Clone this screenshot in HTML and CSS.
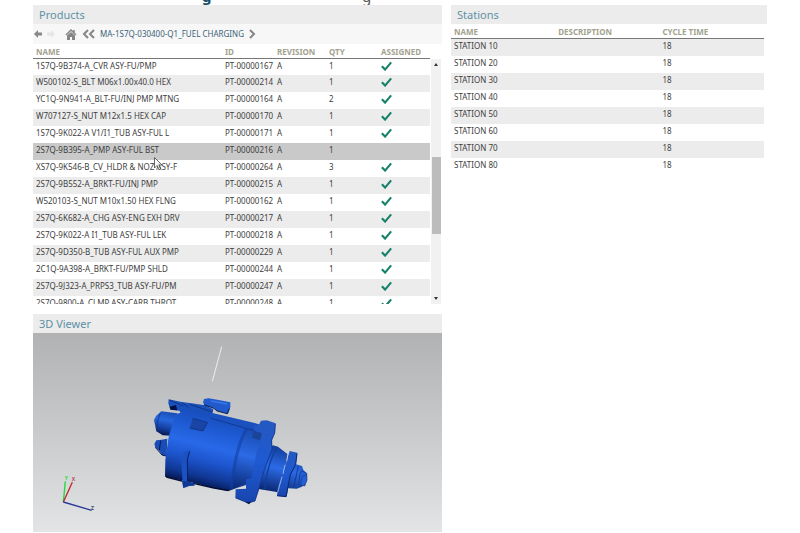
FILE: index.html
```html
<!DOCTYPE html>
<html lang="en">
<head>
<meta charset="utf-8">
<title>Products and Stations</title>
<link rel="stylesheet" href="styles.css">
</head>
<body>
<header class="masthead"><span class="masthead-main">g</span><span class="masthead-sub">g</span></header>
<svg class="defs" aria-hidden="true"><symbol id="check" viewBox="0 0 30 28"><path d="M2 15L11 24L28 4" fill="none" stroke="#16806b" stroke-width="6"/></symbol></svg>
<main class="workspace">
  <div class="column">
    <section class="panel">
      <h2 class="panel-title">Products</h2>
      <nav class="toolbar">
        <button class="tool" aria-label="Back"><svg width="8" height="8" viewBox="0 0 8 8"><path d="M0 4L4 0V2.5H8V5.5H4V8Z" fill="#888"/></svg></button>
        <button class="tool" aria-label="Forward" disabled><svg width="8" height="8" viewBox="0 0 8 8"><path d="M8 4L4 0V2.5H0V5.5H4V8Z" fill="#e6e6e6"/></svg></button>
        <button class="tool home" aria-label="Home"><svg width="12" height="11" viewBox="0 0 12 11"><path d="M1 6L6 1L11 6M9 1V4" fill="none" stroke="#858585" stroke-width="1.5"/><path d="M2 6.500L6 3L10 6.500V11H7V8H5V11H2Z" fill="#858585"/></svg></button>
        <button class="tool" aria-label="Top level"><svg width="13" height="10" viewBox="0 0 13 10"><path d="M6 1L2 5L6 9M12 1L8 5L12 9" fill="none" stroke="#858585" stroke-width="2"/></svg></button>
        <a class="crumb" href="#">MA-1S7Q-030400-Q1_FUEL CHARGING</a>
        <button class="tool" aria-label="Next level"><svg width="7" height="10" viewBox="0 0 7 10"><path d="M1 1L5 5L1 9" fill="none" stroke="#858585" stroke-width="2"/></svg></button>
      </nav>
      <div class="list">
        <div class="list-view">
          <table class="grid products">
            <colgroup><col class="p-name"><col class="p-id"><col class="p-rev"><col class="p-qty"><col></colgroup>
            <thead><tr><th>NAME</th><th>ID</th><th>REVISION</th><th>QTY</th><th>ASSIGNED</th></tr></thead>
            <tbody>
              <tr class="first"><td>1S7Q-9B374-A_CVR ASY-FU/PMP</td><td>PT-00000167</td><td>A</td><td>1</td><td><svg class="check"><use href="#check"/></svg></td></tr>
              <tr><td>W500102-S_BLT M06x1.00x40.0 HEX</td><td>PT-00000214</td><td>A</td><td>1</td><td><svg class="check"><use href="#check"/></svg></td></tr>
              <tr><td>YC1Q-9N941-A_BLT-FU/INJ PMP MTNG</td><td>PT-00000164</td><td>A</td><td>2</td><td><svg class="check"><use href="#check"/></svg></td></tr>
              <tr><td>W707127-S_NUT M12x1.5 HEX CAP</td><td>PT-00000170</td><td>A</td><td>1</td><td><svg class="check"><use href="#check"/></svg></td></tr>
              <tr><td>1S7Q-9K022-A V1/I1_TUB ASY-FUL L</td><td>PT-00000171</td><td>A</td><td>1</td><td><svg class="check"><use href="#check"/></svg></td></tr>
              <tr class="selected"><td class="pointed">2S7Q-9B395-A_PMP ASY-FUL BST<svg class="pointer" width="9" height="14" viewBox="0 0 9 14"><path d="M.5 .5V11L3 8.500L5 13L6.500 12L5 8H8Z" fill="#fff" fill-opacity=".7" stroke="#444" stroke-width=".8"/></svg></td><td>PT-00000216</td><td>A</td><td>1</td><td></td></tr>
              <tr><td>XS7Q-9K546-B_CV_HLDR &amp; NOZ ASY-F</td><td>PT-00000264</td><td>A</td><td>3</td><td><svg class="check"><use href="#check"/></svg></td></tr>
              <tr><td>2S7Q-9B552-A_BRKT-FU/INJ PMP</td><td>PT-00000215</td><td>A</td><td>1</td><td><svg class="check"><use href="#check"/></svg></td></tr>
              <tr><td>W520103-S_NUT M10x1.50 HEX FLNG</td><td>PT-00000162</td><td>A</td><td>1</td><td><svg class="check"><use href="#check"/></svg></td></tr>
              <tr><td>2S7Q-6K682-A_CHG ASY-ENG EXH DRV</td><td>PT-00000217</td><td>A</td><td>1</td><td><svg class="check"><use href="#check"/></svg></td></tr>
              <tr><td>2S7Q-9K022-A I1_TUB ASY-FUL LEK</td><td>PT-00000218</td><td>A</td><td>1</td><td><svg class="check"><use href="#check"/></svg></td></tr>
              <tr><td>2S7Q-9D350-B_TUB ASY-FUL AUX PMP</td><td>PT-00000229</td><td>A</td><td>1</td><td><svg class="check"><use href="#check"/></svg></td></tr>
              <tr><td>2C1Q-9A398-A_BRKT-FU/PMP SHLD</td><td>PT-00000244</td><td>A</td><td>1</td><td><svg class="check"><use href="#check"/></svg></td></tr>
              <tr><td>2S7Q-9J323-A_PRPS3_TUB ASY-FU/PM</td><td>PT-00000247</td><td>A</td><td>1</td><td><svg class="check"><use href="#check"/></svg></td></tr>
              <tr><td>2S7Q-9800-A_CLMP ASY-CARB THROT</td><td>PT-00000248</td><td>A</td><td>1</td><td><svg class="check"><use href="#check"/></svg></td></tr>
            </tbody>
          </table>
        </div>
        <div class="scrollbar"><span class="arrow up"></span><span class="thumb"></span><span class="arrow down"></span></div>
      </div>
    </section>
    <section class="panel">
      <h2 class="panel-title">3D Viewer</h2>
      <div class="viewer">
        <svg class="scene" viewBox="9 99 1227 597" preserveAspectRatio="xMinYMin meet" role="img" aria-label="Fuel pump model">
          <defs>
            <linearGradient id="body" gradientUnits="userSpaceOnUse" x1="255" y1="225" x2="198" y2="448"><stop offset="0" stop-color="#174cb8"/><stop offset=".2" stop-color="#1d58d0"/><stop offset=".45" stop-color="#2869e8"/><stop offset=".65" stop-color="#1d54cc"/><stop offset=".85" stop-color="#103794"/><stop offset="1" stop-color="#041244"/></linearGradient>
            <linearGradient id="neck" gradientUnits="userSpaceOnUse" x1="345" y1="265" x2="300" y2="450"><stop offset="0" stop-color="#1747ac"/><stop offset=".45" stop-color="#2b6be6"/><stop offset="1" stop-color="#0a2874"/></linearGradient>
            <linearGradient id="nose" gradientUnits="userSpaceOnUse" x1="425" y1="325" x2="394" y2="455"><stop offset="0" stop-color="#143f9e"/><stop offset=".45" stop-color="#2b6be6"/><stop offset="1" stop-color="#0a2770"/></linearGradient>
            <linearGradient id="port" gradientUnits="userSpaceOnUse" x1="80" y1="212" x2="63" y2="288"><stop offset="0" stop-color="#174cb3"/><stop offset=".35" stop-color="#2767dc"/><stop offset=".7" stop-color="#143c9c"/><stop offset="1" stop-color="#04113f"/></linearGradient>
            <linearGradient id="flange" x1="0" y1="0" x2="0" y2="1"><stop offset="0" stop-color="#2558c0"/><stop offset=".5" stop-color="#1f5ad2"/><stop offset="1" stop-color="#1845ad"/></linearGradient>
          </defs>
          <path d="M575 140L547 244" stroke="#eee" stroke-width="3"/>
          <g transform="translate(330 120)">
            <path d="M86 178L125 186L155 190L195 196L220 208L214 240L130 232L118 212L91 209L85 190Z" fill="#1a50bb"/>
            <path d="M89 200L108 195L112 211L92 209Z" fill="#041242"/>
            <path d="M88 180L130 198M126 188L146 202M150 193L216 216" fill="none" stroke="#0a2669" stroke-width="2"/>
            <path d="M192 177L206 175L240 181L271 187L271 202L264 221L231 212L222 204L196 197L189 188Z" fill="#215acc"/>
            <path d="M192 194L222 205L231 213L262 221L268 206" fill="none" stroke="#071a4d" stroke-width="3"/>
            <path d="M212 183L262 192" stroke="#3976e7" stroke-width="4"/>
            <path d="M42 240L48 228L64 214L112 220L108 288L68 286L49 274Z" fill="url(#port)"/>
            <path d="M61 219Q48 244 52 274" fill="none" stroke="#0d317f" stroke-width="2"/>
            <path d="M43 312L49 301L60 300L82 296L80 348L66 345L58 332L46 322Z" fill="#1a4cb6"/>
            <path d="M62 302L58 331M46 322L66 345L78 348" fill="none" stroke="#061a53" stroke-width="3"/>
            <path d="M110 222L149 209L214 220L345 252L360 268L335 430L290 444L266 453L247 450L165 430L75 410L76 360L86 290L98 250Z" fill="url(#body)"/>
            <path d="M318 266L350 274L372 290L340 424L290 440L274 446C276 390 290 320 318 266Z" fill="url(#neck)"/>
            <path d="M318 266C292 320 280 371 274 446" fill="none" stroke="#1340a3" stroke-width="9" opacity=".6"/>
            <path d="M214 218L344 249L372 258L355 272L317 263L214 234Z" fill="#1b51bf"/>
            <path d="M214 235L318 265L346 272" fill="none" stroke="#0d2f7e" stroke-width="2"/>
            <path d="M158 236L202 248L189 273L149 264Z" fill="#1a45a4"/>
            <path d="M158 235L202 247M149 264L189 273L202 248" fill="none" stroke="#0b2767" stroke-width="2"/>
            <path d="M135 335L151 331L145 348L142 360L142 440L129 443L123 352Z" fill="#1b52c2"/>
            <path d="M149 335L142 358L143 438" fill="none" stroke="#08206a" stroke-width="3"/>
            <path d="M79 411L126 423M160 430L222 444L266 452" fill="none" stroke="#030d34" stroke-width="4"/>
            <path d="M126 422L130 444L148 438L164 437L162 428Z" fill="#0f3897"/>
            <path d="M399 316L414 320L443 343L432 400L414 457L388 452L350 446L370 338Z" fill="url(#nose)"/>
            <path d="M412 321C392 352 377 405 374 449" fill="none" stroke="#133f9f" stroke-width="4"/>
            <path d="M466 372L486 378L490 389L500 400L498 424L486 440L470 446L436 444L440 383Z" fill="url(#nose)"/>
            <path d="M363 242L380 241L407 250L405 278L396 300L396 330L374 386L358 445L345 484L324 489L286 474L287 448L318 446L318 418L334 415L350 336L365 286L342 270L344 258L355 257Z" fill="url(#flange)"/>
            <path d="M342 272L366 280L360 301L336 293Z" fill="#1b4497"/>
            <path d="M406 252L404 280L395 300L396 328L373 389L356 447L345 483L324 489L287 474" fill="none" stroke="#0c2c7c" stroke-width="2"/>
            <path d="M316 486L334 485L327 493Z" fill="#07194b"/>
            <path d="M449 333L472 338L468 372L452 404L440 470L411 468L414 438L430 396Z" fill="url(#flange)"/>
            <path d="M471 341L467 373L451 404L438 470L411 467" fill="none" stroke="#0a2670" stroke-width="3"/>
            <path d="M443 343L441 362M435 375L429 402M426 410L413 457" stroke="#d8dcec" stroke-width="2"/>
            <path d="M475 378L461 443" stroke="#123c94" stroke-width="3"/>
            <path d="M484 392L500 400L501 420L494 438L477 434L479 404Z" fill="#2360d5" stroke="#0c2d77" stroke-width="2"/>
            <path d="M486 409L499 405M486 411L482 432" stroke="#0d368e" stroke-width="2"/>
          </g>
          <g fill="none" stroke-width="4"><path d="M100 606L106 544" stroke="#20dd35"/><path d="M100 606L127 547" stroke="#bd2634"/><path d="M100 606L185 631" stroke="#29399a"/></g>
          <g class="axis-labels"><text x="104" y="541" fill="#35d944">Y</text><text x="125" y="542" fill="#b64b55">X</text><text x="183" y="629" fill="#3c486f">Z</text></g>
        </svg>
      </div>
    </section>
  </div>
  <section class="column">
    <h2 class="panel-title">Stations</h2>
    <div class="stations-view">
      <table class="grid stations">
        <colgroup><col class="s-name"><col class="s-desc"><col></colgroup>
        <thead><tr><th>NAME</th><th>DESCRIPTION</th><th>CYCLE TIME</th></tr></thead>
        <tbody>
          <tr><td>STATION 10</td><td></td><td>18</td></tr>
          <tr><td>STATION 20</td><td></td><td>18</td></tr>
          <tr><td>STATION 30</td><td></td><td>18</td></tr>
          <tr><td>STATION 40</td><td></td><td>18</td></tr>
          <tr><td>STATION 50</td><td></td><td>18</td></tr>
          <tr><td>STATION 60</td><td></td><td>18</td></tr>
          <tr><td>STATION 70</td><td></td><td>18</td></tr>
          <tr><td>STATION 80</td><td></td><td>18</td></tr>
        </tbody>
      </table>
    </div>
  </section>
</main>
</body>
</html>
```
FILE: styles.css
```css
* { box-sizing: border-box; }
body { margin: 0; background: #fff; color: #404040; font-family: "Noto Sans", "Open Sans", sans-serif; font-size: 8px; line-height: 12px; }
.defs { display: none; }
.masthead { height: 5px; overflow: hidden; display: flex; align-items: flex-end; padding-left: 202px; font-size: 15px; line-height: 18px; }
.masthead-main { width: 160px; font-weight: 700; color: #174f6d; }
.masthead-sub { color: #555; }
.workspace { display: grid; grid-template-columns: 409fr 316fr; gap: 9px; padding: 0 33px; align-items: start; }
.column { display: grid; gap: 10px; min-width: 0; }
.column > .stations-view { margin-top: -10px; }
.panel { min-width: 0; }
.panel-title { margin: 0; height: 19px; padding-left: 6px; background: #ececec; color: #6091a5; font-size: 11px; line-height: 20px; font-weight: 400; }
.toolbar { display: flex; align-items: center; height: 20px; padding-left: 1px; background: #f7f7f7; gap: 5px; }
.tool { display: flex; padding: 0; border: 0; background: none; }
.home { margin-left: 5px; }
.crumb { color: #3d6478; text-decoration: none; white-space: nowrap; }
.list { display: flex; height: 260px; }
.list-view { flex: 1; min-width: 0; overflow: hidden; }
.scrollbar { width: 10px; margin: 15px 1px 0; background: #f1f1f1; display: flex; flex-direction: column; align-items: center; }
.thumb { width: 9px; height: 77px; margin: 91px 0 auto; background: #bcbcbc; }
.arrow { border: 2px solid transparent; }
.up { border-bottom: 3px solid #333; border-top: 0; margin-top: 4px; }
.down { border-top: 3px solid #333; border-bottom: 0; margin-bottom: 4px; }
.grid { width: 100%; table-layout: fixed; border-collapse: separate; border-spacing: 0; }
.grid th { height: 15px; padding: 1px 0 0 3px; border-bottom: 1px solid #777; color: #a3a28f; font-size: 8px; font-weight: 700; line-height: 13px; text-align: left; white-space: nowrap; }
.grid td { height: 17px; padding: 0 0 3px 3px; line-height: 14px; white-space: nowrap; }
.grid .first td { height: 16px; line-height: 13px; }
.products tbody tr:nth-child(even), .stations tbody tr:nth-child(odd) { background: #ececec; }
.products tbody tr.selected { background: #c9c9c9; }
.p-name { width: 47.6%; }
.p-id { width: 13.1%; }
.p-rev { width: 13.1%; }
.p-qty { width: 13.1%; }
.s-name, .s-desc { width: 33.3%; }
.stations-view { padding-right: 3px; }
.check { display: block; width: 11px; height: 10px; }
.pointed { position: relative; }
.pointer { position: absolute; left: 121px; top: 14px; z-index: 1; }
.viewer { height: 199px; background: linear-gradient(#b1b2b3, #c9cacb 50%, #e3e4e5); }
.scene { display: block; height: 199px; width: 100%; }
.axis-labels { font-size: 15px; font-weight: 700; }
```
